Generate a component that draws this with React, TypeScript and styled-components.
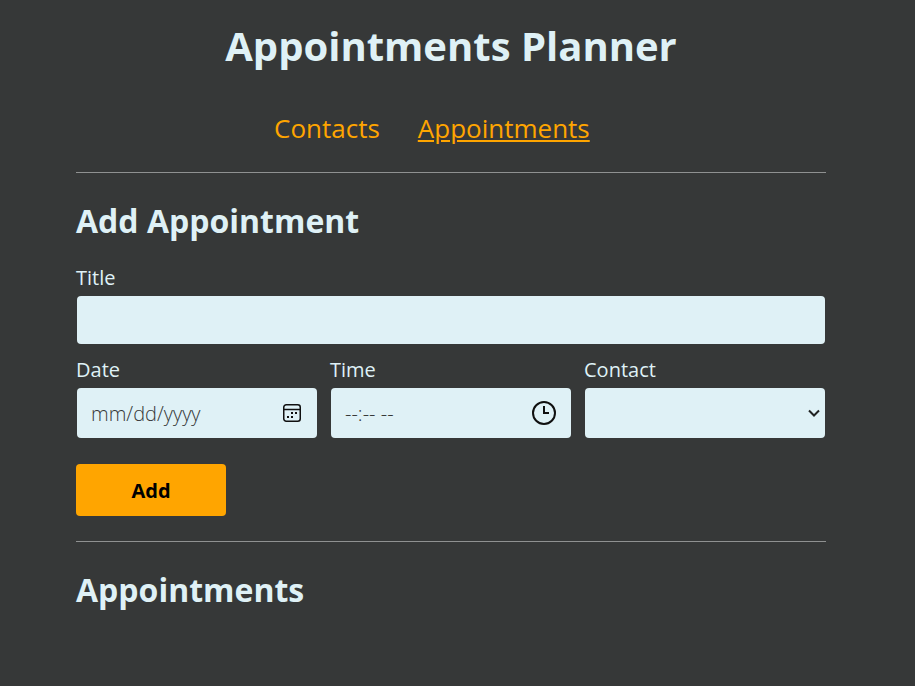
import React from "react";
import styled, { createGlobalStyle, css } from "styled-components";

const Global = createGlobalStyle`
  * { box-sizing: border-box; }
  body {
    margin: 0;
    min-height: 100vh;
    background: #363838;
    color: #dff1f6;
    font: 20px/27px "Open Sans", sans-serif;
  }
`;

const Page = styled.main`
  width: 750px;
  margin-left: 76px;
  padding-top: 19px;
`;

const PageTitle = styled.h1`
  margin: 0;
  font-size: 40px;
  line-height: 54px;
  font-weight: 700;
  text-align: center;
`;

const Nav = styled.nav`
  display: flex;
  gap: 38px;
  padding: 38px 0 26px 198px;
`;

const NavLink = styled.a<{ $active?: boolean }>`
  color: #ffa500;
  font-size: 26px;
  line-height: 35px;
  text-decoration: ${(p) => (p.$active ? "underline" : "none")};
`;

const Divider = styled.hr`
  height: 1px;
  margin: 0;
  border: 0;
  background: #8f9191;
`;

const Heading = styled.h2`
  margin: 0;
  padding: 26px 0 22px;
  font-size: 32px;
  line-height: 43px;
  font-weight: 700;
`;

const Form = styled.form`
  padding-bottom: 25px;
`;

const Row = styled.div`
  display: grid;
  grid-template-columns: repeat(3, 242px);
  gap: 12px;
  padding-top: 12px;
`;

const Field = styled.label`
  display: block;
`;

const control = css`
  display: flex;
  align-items: center;
  width: calc(100% - 2px);
  margin: 5px 1px 0;
  border: 0;
  border-radius: 4px;
  background: #dff1f6;
  color: #363838;
  font: 20px/27px "Open Sans", sans-serif;
`;

const TitleInput = styled.input`
  ${control}
  height: 48px;
  padding: 0 14px;
`;

const Picker = styled.div<{ $end: number }>`
  ${control}
  height: 50px;
  padding: 0 ${(p) => p.$end}px 0 14px;
  justify-content: space-between;
`;

const Placeholder = styled.span`
  position: relative;
  font-weight: 300;
`;

const AddButton = styled.button`
  display: block;
  width: 150px;
  height: 52px;
  margin-top: 26px;
  padding: 0;
  border: 0;
  border-radius: 4px;
  background: #ffa500;
  color: #000;
  font: 700 20px/27px "Open Sans", sans-serif;
`;

const CalendarIcon = () => (
  <svg width="20" height="20" viewBox="0 0 20 20" fill="none" stroke="#101010" strokeWidth="1.5">
    <rect x="1.75" y="1.75" width="16.5" height="16.5" rx="2.5" />
    <path d="M2 6.5h16" />
    <path d="M9 10h2M13 10h2M5 14h2M9 14h2" strokeWidth="2" />
  </svg>
);

const ClockIcon = () => (
  <svg width="26" height="26" viewBox="0 0 26 26" fill="none" stroke="#101010" strokeWidth="2">
    <circle cx="13" cy="13" r="11" />
    <path d="M13 6v7h5" />
  </svg>
);

const ChevronIcon = () => (
  <svg width="12" height="8" viewBox="0 0 12 8" fill="none" stroke="#202222" strokeWidth="2">
    <path d="M1 1.5l5 5 5-5" />
  </svg>
);

export default function App() {
  return (
    <>
      <Global />
      <Page>
        <PageTitle>Appointments Planner</PageTitle>
        <Nav>
          <NavLink>Contacts</NavLink>
          <NavLink $active>Appointments</NavLink>
        </Nav>
        <Divider />
        <Heading>Add Appointment</Heading>
        <Form>
          <Field>
            Title
            <TitleInput type="text" />
          </Field>
          <Row>
            <Field>
              Date
              <Picker $end={15}>
                <Placeholder>mm/dd/yyyy</Placeholder>
                <CalendarIcon />
              </Picker>
            </Field>
            <Field>
              Time
              <Picker $end={14}>
                <Placeholder>--:-- --</Placeholder>
                <ClockIcon />
              </Picker>
            </Field>
            <Field>
              Contact
              <Picker $end={5}>
                <span />
                <ChevronIcon />
              </Picker>
            </Field>
          </Row>
          <AddButton type="button">Add</AddButton>
        </Form>
        <Divider />
        <Heading>Appointments</Heading>
      </Page>
    </>
  );
}
